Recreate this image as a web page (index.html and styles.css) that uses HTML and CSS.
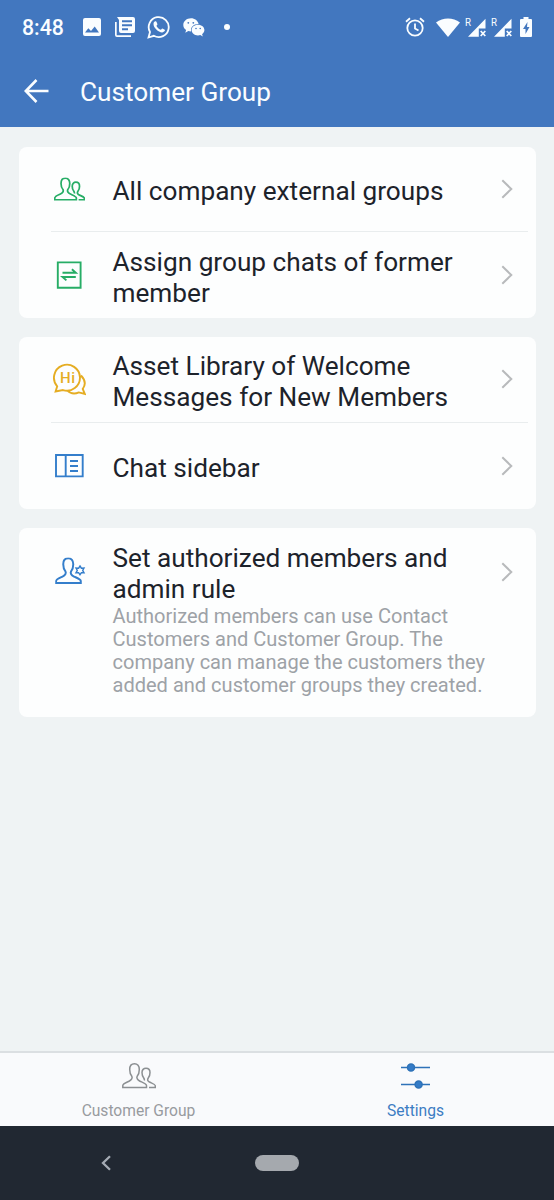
FILE: index.html
```html
<!DOCTYPE html>
<html lang="en">
<head>
<meta charset="utf-8">
<title>Customer Group</title>
<link rel="stylesheet" href="styles.css">
</head>
<body>
<svg class="defs" aria-hidden="true">
  <symbol id="person" viewBox="0 0 34 26">
    <path d="M12.5.8C9.5.8 7.7 3 7.7 6.5c0 3 .6 5 2.1 6.7 1 1.800-.3 3.800-2.800 5C4 19.600.8 20.800.8 22.500v1.900h23.700v-1.900c0-1.700-3.500-2.900-6.500-4.300-2.500-1.200-3.800-3.200-2.800-5 1.500-1.700 2.100-3.700 2.100-6.700C17.300 3 15.500.8 12.500.8z"/>
  </symbol>
  <symbol id="people" viewBox="0 0 34 26">
    <use href="#person" width="34" height="26"/>
    <path d="M22.300 17.500c.3-1 0-1.700-.7-2.700-1.200-1.500-1.600-3.300-1.600-5.300 0-2.600 1.600-4.300 4-4.300s4 1.700 4 4.300c0 2-.4 3.800-1.600 5.300-1.400 2-.7 3.500 1.600 4.500 3 1.300 5.300 2 5.300 3.500v1.600H27"/>
  </symbol>
  <symbol id="chevron" viewBox="0 0 12 20"><path d="M1.300 1.300 10.300 10l-9 8.700"/></symbol>
</svg>

<header class="header">
  <div class="status">
    <span class="time">8:48</span>
    <svg class="s-icon photo" viewBox="0 0 18 18"><path fill-rule="evenodd" d="M2 0h14a2 2 0 0 1 2 2v14a2 2 0 0 1-2 2H2a2 2 0 0 1-2-2V2a2 2 0 0 1 2-2zm0 14.500h14L11.700 8.500 8 13l-2.700-2.700z"/></svg>
    <svg class="s-icon news" viewBox="0 0 20 20"><path fill-rule="evenodd" d="M2 0h16a2 2 0 0 1 2 2v12a2 2 0 0 1-2 2H6a2 2 0 0 1-2-2V3zM7 3.200v2h10v-2zm0 4v2h10v-2zm0 4v2h6v-2z"/><path d="M0 5h1.700v13.300H16V20H2a2 2 0 0 1-2-2z"/></svg>
    <svg class="s-icon whatsapp" viewBox="0 0 24 24"><path class="ring" d="M1.500 22.500 3 17a10 10 0 1 1 3.800 3.800z"/><path d="M8.300 6.300c-.7.100-1.800 1.100-1.800 2.600 0 3.800 4.800 8.200 8.600 8.500 1.300.1 2.800-1 2.900-2.300 0-.5-2.300-1.800-2.800-1.700-.5.100-.9 1.400-1.500 1.300-1.500-.4-3.800-2.600-4.200-3.800-.1-.6 1-.9.900-1.700-.1-.5-1-2.900-1.400-2.900z"/></svg>
    <svg class="s-icon wechat" viewBox="0 0 22 19"><path d="M8 .3C3.700.3.300 3.200.300 6.900c0 2.100 1.100 3.900 2.800 5.100l-.8 2.700 3-1.600c.8.200 1.700.4 2.800.4-.9-4.300 2.700-7.700 7.500-7.500C14.900 2.600 11.700.3 8 .3z"/><path d="M15 6.700c-3.700 0-6.400 2.400-6.400 5.400s2.700 5.400 6.400 5.400c.8 0 1.600-.1 2.300-.4l2.500 1.400-.7-2.200c1.400-1 2.300-2.500 2.300-4.200 0-3-2.700-5.400-6.400-5.400z"/><g class="eyes"><circle cx="5.300" cy="4.800" r=".9"/><circle cx="10.300" cy="4.800" r=".9"/><circle cx="13" cy="10.500" r=".8"/><circle cx="17.200" cy="10.500" r=".8"/></g></svg>
    <span class="dot"></span>
    <span class="spacer"></span>
    <svg class="s-icon alarm" viewBox="0 0 20 20"><g class="ring"><circle cx="10" cy="11" r="7.700"/><path d="M10 6.500v5l3.500 2M1 4.800l4-3.500m10 0 4 3.500"/></g></svg>
    <svg class="s-icon wifi" viewBox="0 0 24 19"><path d="M0 4.500C7-.9 17-.9 24 4.500L12 19z"/></svg>
    <svg class="signal" viewBox="0 0 21 22"><path class="solid" d="M20.500 2.700v9.800h-6.700v8.200H3z"/><path class="cross" d="m15.700 15 4.600 5m0-5-4.600 5"/><text x="0" y="9.600" textLength="6" lengthAdjust="spacingAndGlyphs">R</text></svg>
    <svg class="signal second" viewBox="0 0 21 22"><path class="solid" d="M20.500 2.700v9.800h-6.700v8.200H3z"/><path class="cross" d="m15.700 15 4.600 5m0-5-4.600 5"/><text x="0" y="9.600" textLength="6" lengthAdjust="spacingAndGlyphs">R</text></svg>
    <svg class="s-icon battery" viewBox="0 0 12 20"><path fill-rule="evenodd" d="M3.500 0h5v2H11q1 0 1 1v16q0 1-1 1H1q-1 0-1-1V3q0-1 1-1h2.500zM7.500 5 3 12h2.500v5L9.500 10H7z"/></svg>
  </div>
  <div class="appbar">
    <svg class="back" viewBox="0 0 25 24"><path d="M24.500 12H2M12.500 1 1.800 12l10.700 11"/></svg>
    <h1 class="title">Customer Group</h1>
  </div>
</header>

<main class="content">
  <section class="card">
    <div class="row divided">
      <svg class="icon green" viewBox="0 0 34 34"><use href="#people" x="2" y="5.500" width="31" height="23.700"/></svg>
      <div class="label">All company external groups</div>
      <svg class="chevron"><use href="#chevron"/></svg>
    </div>
    <div class="row">
      <svg class="icon green" viewBox="0 0 34 34"><path d="M5.800 4.400h22.800v25.400H5.800zM10.500 14.700h13.300l-3.900-3.400M23.800 19H10.500l3.900 3.400"/></svg>
      <div class="label">Assign group chats of former member</div>
      <svg class="chevron"><use href="#chevron"/></svg>
    </div>
  </section>
  <section class="card">
    <div class="row divided">
      <svg class="icon yellow" viewBox="0 0 34 34"><path d="M5.200 24.300A13 13 0 1 1 11 28.100L3.600 29.500zM29 13.500c4.300 4.500 4.700 9.500 1.700 13.500l2.200 5-6-1.600c-4.500 1.900-8.700 1.100-11.800-2"/><text x="8" y="20.800">Hi</text></svg>
      <div class="label">Asset Library of Welcome Messages for New Members</div>
      <svg class="chevron"><use href="#chevron"/></svg>
    </div>
    <div class="row">
      <svg class="icon blue" viewBox="0 0 34 34"><path d="M4 6h26.700v21.400H4zM13.700 6v21.400M18 12h8m-8 5h8m-8 5h8"/></svg>
      <div class="label">Chat sidebar</div>
      <svg class="chevron"><use href="#chevron"/></svg>
    </div>
  </section>
  <section class="card">
    <div class="row detailed">
      <svg class="icon blue" viewBox="0 0 34 34"><use href="#person" x="3.200" y="2.500" width="35.500" height="27.200"/><path class="gear" d="m28 11 1.400 2.200 2.600-.1-1.300 2.300 1.300 2.300-2.600-.1-1.400 2.200-1.400-2.200-2.600.1 1.300-2.300-1.300-2.300 2.600.1z"/></svg>
      <div class="label">Set authorized members and admin rule
        <p class="note">Authorized members can use Contact Customers and Customer Group. The company can manage the customers they added and customer groups they created.</p>
      </div>
      <svg class="chevron"><use href="#chevron"/></svg>
    </div>
  </section>
</main>

<footer class="tabs">
  <div class="tab">
    <svg class="tab-icon"><use href="#people"/></svg>
    <span>Customer Group</span>
  </div>
  <div class="tab active">
    <svg class="tab-icon" viewBox="0 0 34 26"><path d="M2 4.600h29m-29 17h29"/><circle cx="12" cy="4.600" r="3.500"/><circle cx="19.600" cy="21.600" r="3.500"/></svg>
    <span>Settings</span>
  </div>
</footer>
<nav class="system-nav">
  <svg class="nav-back" viewBox="0 0 10 16"><path d="M9 1.200 2 8l7 6.800"/></svg>
  <span class="home-pill"></span>
</nav>
</body>
</html>
```

FILE: styles.css
```css
* { box-sizing: border-box; }
body {
  margin: 0;
  height: 1200px;
  display: flex;
  flex-direction: column;
  background: #eff3f4;
  font-family: Roboto, sans-serif;
  overflow: hidden;
}
svg { flex: none; fill: none; }
.defs { position: absolute; width: 0; height: 0; }

.header { height: 127px; background: #4277bf; color: #fafdff; }
.status { height: 54px; display: flex; align-items: center; padding: 0 22px; }
.time { width: 60.500px; font-size: 21.300px; font-weight: 500; line-height: 54px; padding-top: 2px; }
.s-icon { fill: #fafdff; }
.ring { fill: none; stroke: #fafdff; stroke-width: 1.8; }
.photo { width: 18px; height: 18px; }
.news { width: 20px; height: 20px; margin-left: 14px; }
.whatsapp { width: 24px; height: 24px; margin-left: 12px; }
.wechat { width: 22px; height: 19px; margin-left: 12px; }
.eyes { fill: #4277bf; }
.dot { width: 6px; height: 6px; border-radius: 50%; background: #fafdff; margin-left: 19px; }
.spacer { flex: 1; }
.alarm { width: 20px; height: 20px; margin-right: 11px; }
.wifi { width: 24px; height: 19px; margin-right: 5px; }
.signal { width: 21px; height: 22px; margin-right: 5px; font-size: 11.500px; }
.signal text { fill: #fafdff; }
.signal.second { margin-right: 8px; }
.solid { fill: #fafdff; }
.cross { stroke: #fafdff; stroke-width: 1.700; }
.battery { width: 12px; height: 20px; }
.appbar { height: 73px; display: flex; align-items: center; padding: 0 24px; }
.back { width: 25px; height: 24px; stroke: #fafdff; stroke-width: 2.600; }
.title { margin: 3px 0 0 31px; font-size: 26.200px; font-weight: 400; line-height: 31px; }

.content { flex: 1; display: flex; flex-direction: column; gap: 19px; padding: 19.500px 18.500px 0; }
.card { background: #fdfefe; border-radius: 8px; }
.card:nth-child(-n+2) { height: 171.500px; }
.row {
  height: 86px;
  display: grid;
  grid-template-columns: 34px 1fr 12px;
  column-gap: 26px;
  align-items: center;
  margin-left: 32.500px;
  padding-left: 1px;
  padding-right: 23px;
}
.divided { height: 85.500px; border-bottom: 1px solid #e9edee; margin-right: 8px; padding-right: 15px; }
.icon { width: 34px; height: 34px; stroke-width: 1.900; }
.green { stroke: #27ad66; }
.yellow { stroke: #e5ad23; }
.yellow text { fill: #e5ad23; stroke: none; font-size: 15px; font-weight: 500; letter-spacing: .7px; }
.blue { stroke: #347ecb; }
.gear { stroke-width: 1.400; }
.label { font-size: 26.200px; line-height: 31px; padding-top: 5.500px; padding-left: .5px; color: #1d232b; margin-right: -15px; padding-right: 14px; }
.chevron { width: 12px; height: 20px; stroke: #b8babc; stroke-width: 2; }
.detailed { height: 189px; align-items: start; padding-top: 27px; }
.detailed .label { margin-top: -12px; padding-right: 0; padding-top: 0; }
.detailed .chevron { margin-top: 7px; }
.note { margin: 0; font-size: 20.050px; line-height: 23.100px; color: #9da2a7; }

.tabs { height: 75px; display: flex; border-top: 2px solid #dbdfe2; background: #f9fafc; }
.tab { flex: 1; display: flex; flex-direction: column; align-items: center; padding-top: 10px; color: #989b9f; font-size: 15.600px; line-height: 20px; gap: 12px; }
.tab-icon { width: 34px; height: 26px; stroke: #8b8f92; stroke-width: 1.500; }
.active { color: #3d7dc3; }
.active .tab-icon { stroke: #2e72b8; fill: #347bc7; stroke-width: 1.500; }
.system-nav { height: 74px; display: flex; align-items: center; padding-left: 101px; background: #212832; }
.nav-back { width: 10px; height: 16px; stroke: #a5abb4; stroke-width: 2.300; }
.home-pill { width: 44px; height: 16px; border-radius: 8px; background: #a5a9ae; margin-left: 144px; }
```
